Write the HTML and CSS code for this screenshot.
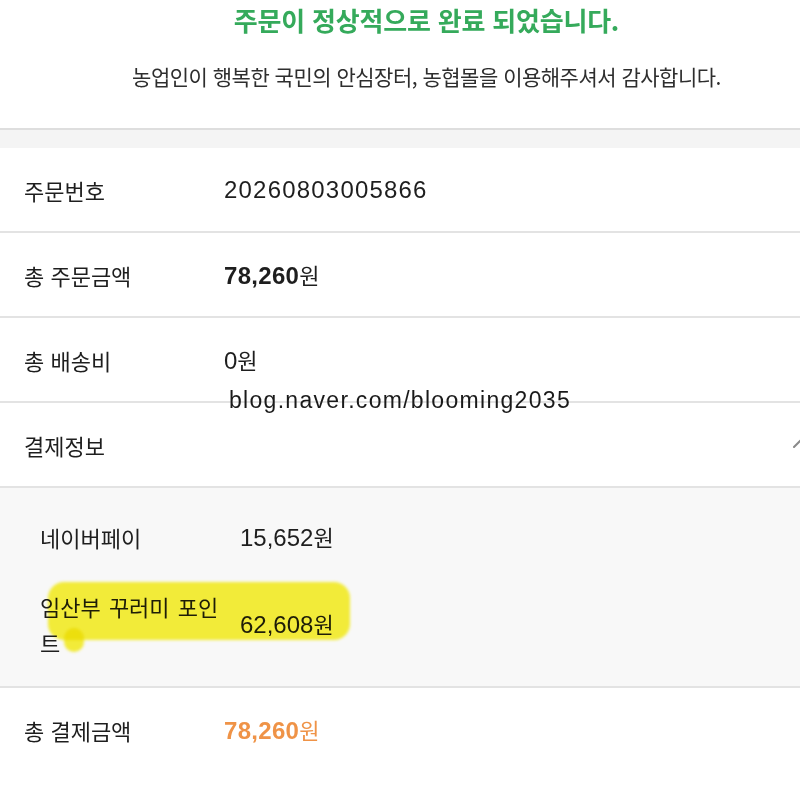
FILE: index.html
```html
<!DOCTYPE html>
<html lang="ko">
<head>
<meta charset="utf-8">
<title>주문완료</title>
<link rel="stylesheet" href="styles.css">
</head>
<body>
<div class="page">
  <header class="complete">
    <h1 class="complete-title">주문이 정상적으로 완료 되었습니다.</h1>
    <p class="complete-desc">농업인이 행복한 국민의 안심장터, 농협몰을 이용해주셔서 감사합니다.</p>
  </header>
  <div class="band"></div>
  <section class="info">
    <div class="row">
      <div class="label">주문번호</div>
      <div class="value order-no">20260803005866</div>
    </div>
    <div class="row">
      <div class="label">총 주문금액</div>
      <div class="value strong">78,260<span class="won">원</span></div>
    </div>
    <div class="row">
      <div class="label">총 배송비</div>
      <div class="value">0<span class="won">원</span></div>
    </div>
    <div class="row row-toggle">
      <div class="label">결제정보</div>
      <svg class="chevron" width="28" height="16" viewBox="0 0 28 16"><path d="M2 15 L14 3 L26 15" fill="none" stroke="#8a8a8a" stroke-width="2" stroke-linecap="round"/></svg>
    </div>
    <div class="pay-detail">
      <div class="highlight"></div>
      <div class="highlight-drip"></div>
      <div class="pay-row">
        <div class="pay-label">네이버페이</div>
        <div class="value">15,652<span class="won">원</span></div>
      </div>
      <div class="pay-row">
        <div class="pay-label wrap">임산부 꾸러미 포인트</div>
        <div class="value">62,608<span class="won">원</span></div>
      </div>
    </div>
    <div class="row last">
      <div class="label">총 결제금액</div>
      <div class="value strong orange">78,260<span class="won">원</span></div>
    </div>
  </section>
  <div class="watermark">blog.naver.com/blooming2035</div>
</div>
</body>
</html>
```

FILE: styles.css
```css
html, body {
  margin: 0;
  padding: 0;
  overflow: hidden;
  background: #ffffff;
}
body {
  font-family: "Noto Sans CJK KR", "Noto Sans", sans-serif;
  color: #222222;
}
.page {
  position: relative;
  width: 800px;
}
.complete {
  height: 128px;
  display: flex;
  flex-direction: column;
  align-items: center;
  padding-top: 1px;
  box-sizing: border-box;
  padding-left: 53px;
}
.complete-title {
  margin: 0;
  font-size: 26px;
  line-height: 38px;
  font-weight: 700;
  color: #35aa5b;
  letter-spacing: -0.2px;
}
.complete-desc {
  margin: 22px 0 0;
  font-size: 21px;
  line-height: 30px;
  color: #2e2e2e;
  letter-spacing: -0.5px;
}
.band {
  height: 18px;
  border-top: 2px solid #dedede;
  background: #f4f4f4;
}
.row {
  display: flex;
  align-items: center;
  height: 83px;
  padding-left: 24px;
  border-bottom: 2px solid #e3e3e3;
}
.row.last {
  border-bottom: none;
}
.row-toggle {
  justify-content: space-between;
}
.chevron {
  margin-right: -20px;
  margin-top: -10px;
}
.label {
  width: 200px;
  font-size: 22px;
  line-height: 36px;
  color: #1e1e1e;
}
.value {
  font-family: "Liberation Sans", "Noto Sans CJK KR", sans-serif;
  font-size: 24px;
  line-height: 36px;
  letter-spacing: 0;
  color: #1e1e1e;
}
.won {
  font-family: "Noto Sans CJK KR", sans-serif;
  font-size: 22px;
  letter-spacing: 0;
}
.order-no {
  letter-spacing: 1.2px;
}
.strong {
  font-weight: 700;
  letter-spacing: 0.3px;
}
.strong .won {
  font-weight: 400;
}
.orange {
  color: #ef9347;
}
.pay-detail {
  position: relative;
  background: #f8f8f8;
  border-bottom: 2px solid #e3e3e3;
  padding: 30px 0 26px 40px;
  display: flex;
  flex-direction: column;
  gap: 32px;
}
.pay-row {
  display: flex;
  align-items: center;
}
.pay-label {
  width: 186px;
  margin-right: 14px;
  font-size: 22px;
  line-height: 36px;
  color: #1e1e1e;
}
.pay-label.wrap {
  word-break: break-all;
  word-spacing: 2px;
}
.highlight {
  position: absolute;
  left: 48px;
  top: 94px;
  width: 302px;
  height: 58px;
  border-radius: 16px;
  background: #f9f23a;
  mix-blend-mode: multiply;
  filter: blur(1.5px);
}
.highlight-drip {
  position: absolute;
  left: 64px;
  top: 140px;
  width: 20px;
  height: 24px;
  border-radius: 10px;
  background: #f9f23a;
  mix-blend-mode: multiply;
  filter: blur(1.5px);
}
.watermark {
  position: absolute;
  left: 229px;
  top: 385px;
  font-family: "Liberation Sans", sans-serif;
  font-size: 23px;
  line-height: 30px;
  letter-spacing: 1.3px;
  color: #1a1a1a;
}
```
